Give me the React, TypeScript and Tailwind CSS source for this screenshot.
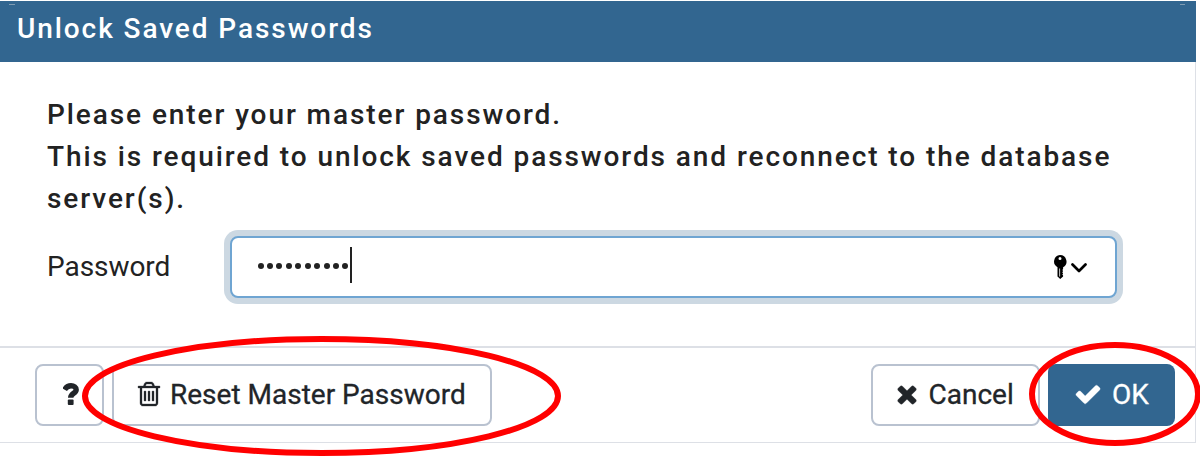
import React from "react";

const PATHS = {
  trash:
    "M704 736v576q0 14-9 23t-23 9h-64q-14 0-23-9t-9-23v-576q0-14 9-23t23-9h64q14 0 23 9t9 23zm256 0v576q0 14-9 23t-23 9h-64q-14 0-23-9t-9-23v-576q0-14 9-23t23-9h64q14 0 23 9t9 23zm256 0v576q0 14-9 23t-23 9h-64q-14 0-23-9t-9-23v-576q0-14 9-23t23-9h64q14 0 23 9t9 23zm128 724v-948h-896v948q0 22 7 40.5t14.5 27 10.5 8.5h832q3 0 10.5-8.5t14.5-27 7-40.5zm-672-1076h448l-48-117q-7-9-17-11h-317q-10 2-17 11zm928 32v64q0 14-9 23t-23 9h-96v948q0 83-47 143.5t-113 60.5h-832q-66 0-113-58.5t-47-141.5v-952h-96q-14 0-23-9t-9-23v-64q0-14 9-23t23-9h309l70-167q15-37 54-63t79-26h320q40 0 79 26t54 63l70 167h309q14 0 23 9t9 23z",
  times:
    "M1490 1322q0 40-28 68l-136 136q-28 28-68 28t-68-28l-294-294-294 294q-28 28-68 28t-68-28l-136-136q-28-28-28-68t28-68l294-294-294-294q-28-28-28-68t28-68l136-136q28-28 68-28t68 28l294 294 294-294q28-28 68-28t68 28l136 136q28 28 28 68t-28 68l-294 294 294 294q28 28 28 68z",
  check:
    "M1671 566q0 40-28 68l-724 724-136 136q-28 28-68 28t-68-28l-136-136-362-362q-28-28-28-68t28-68l136-136q28-28 68-28t68 28l294 295 656-657q28-28 68-28t68 28l136 136q28 28 28 68z",
};

function Icon({ name, className }: { name: keyof typeof PATHS; className: string }) {
  return (
    <svg viewBox="0 0 1792 1792" className={`size-7 shrink-0 ${className}`} fill="currentColor" stroke="currentColor" strokeWidth="20" aria-hidden="true">
      <path d={PATHS[name]} />
    </svg>
  );
}

function QuestionIcon() {
  return (
    <svg viewBox="0 0 16 22" className="mb-[2px] ml-[2px] h-[22px] w-4 shrink-0" aria-hidden="true">
      <path d="M1.6 6.6C3.3 3.8 5.2 2.8 8 2.8c3.1 0 5.2 1.5 5.2 3.9 0 3.7-5.5 3.6-5.5 8.1" fill="none" stroke="currentColor" strokeWidth="5.4" />
      <rect x="4.8" y="16.4" width="5.8" height="5.6" rx="1" fill="currentColor" />
    </svg>
  );
}

const outlineButton = "flex h-[62px] items-center rounded-lg border-2 border-[#b9c2d0] bg-white";

export default function App() {
  return (
    <div className="relative h-[456px] w-[1200px] overflow-hidden bg-white pt-px font-['Roboto',sans-serif] text-[28px] text-[#222]">
      <div className="flex h-[442px] w-[1196px] flex-col border-r border-b border-[#dde0e6]">
        <header className="-mr-px flex h-[61px] shrink-0 items-center bg-[#326690] pb-[5px] pl-[17px] leading-[42px] font-medium tracking-[1.92px] text-white">
          Unlock Saved Passwords
        </header>

        <main className="h-[284px] shrink-0 pt-[32px] pl-[47px]">
          <p className="w-[1090px] leading-[42px] font-medium tracking-[1.92px]">
            Please enter your master password.
            <br />
            This is required to unlock saved passwords and reconnect to the database server(s).
          </p>
          <div className="mt-[16px] flex h-[62px] items-center">
            <label className="w-[183px] tracking-[-0.05px]">Password</label>
            <div className="flex h-[62px] w-[887px] items-center rounded-lg border-2 border-[#6fa5d2] bg-white pb-[3px] pl-[25.5px] shadow-[0_0_0_6px_#ccd8e2]">
              <div className="flex gap-[3.45px]">
                {Array.from({ length: 10 }, (_, i) => (
                  <span key={i} className="size-[6px] rounded-full bg-[#222]" />
                ))}
              </div>
              <span className="mb-px ml-[1.5px] h-9 w-[2px] bg-[#222]" />
              <div className="mt-[3px] ml-auto flex items-center pr-[28px] text-black">
                <svg className="h-[24px] w-[14px]" viewBox="0 0 14 24" aria-hidden="true">
                  <path
                    fill="currentColor"
                    fillRule="evenodd"
                    d="M7 0a6.5 6.5 0 0 1 3.1 12.2V14l-.8 1 .8 1-.8 1.2.8 1.2-.8 1.2.8 1v1L7.2 24 4.5 21.5v-9.3A6.5 6.5 0 0 1 7 0zM7 2a1.5 1.5 0 1 0 0 3 1.5 1.5 0 0 0 0-3zM6.3 13.5v8h.8v-8z"
                  />
                </svg>
                <svg className="mt-[2px] ml-[4px] h-[10px] w-[16px]" viewBox="0 0 16 10" fill="none" aria-hidden="true">
                  <path d="M1.5 1.5 8 8l6.5-6.5" stroke="currentColor" strokeWidth="2.7" strokeLinecap="round" strokeLinejoin="round" />
                </svg>
              </div>
            </div>
          </div>
        </main>

        <footer className="flex h-[96px] shrink-0 items-start gap-2 border-t-2 border-[#dde0e6] pt-[16px] pr-5 pl-[35px] text-[#212529] [-webkit-text-stroke:0.3px_currentColor]">
          <button className={`${outlineButton} w-[69px] justify-center`} aria-label="Help">
            <QuestionIcon />
          </button>
          <button className={`${outlineButton} w-[380px] pl-[21px]`}>
            <Icon name="trash" className="mb-[2px]" />
            <span className="ml-[7px] whitespace-nowrap">Reset Master Password</span>
          </button>
          <button className={`${outlineButton} ml-auto w-[169px] pl-[20px]`}>
            <Icon name="times" className="mb-[3px]" />
            <span className="ml-[7.5px]">Cancel</span>
          </button>
          <button className="flex h-[62px] w-[127px] items-center rounded-lg bg-[#326690] pl-[26px] text-white">
            <Icon name="check" className="mb-[2px]" />
            <span className="ml-[10px]">OK</span>
          </button>
        </footer>
      </div>

      <svg className="pointer-events-none absolute inset-0" width="1200" height="456" fill="none" stroke="#f00" strokeWidth="6" aria-hidden="true">
        <ellipse cx="321.5" cy="396" rx="236.5" ry="57" />
        <ellipse cx="1115" cy="394" rx="83" ry="49" />
        <path d="M9 4.5h6" stroke="#7f9cb3" strokeWidth="1" />
        <path d="M1180 4.5h5" stroke="#7f9cb3" strokeWidth="1" />
      </svg>
    </div>
  );
}
